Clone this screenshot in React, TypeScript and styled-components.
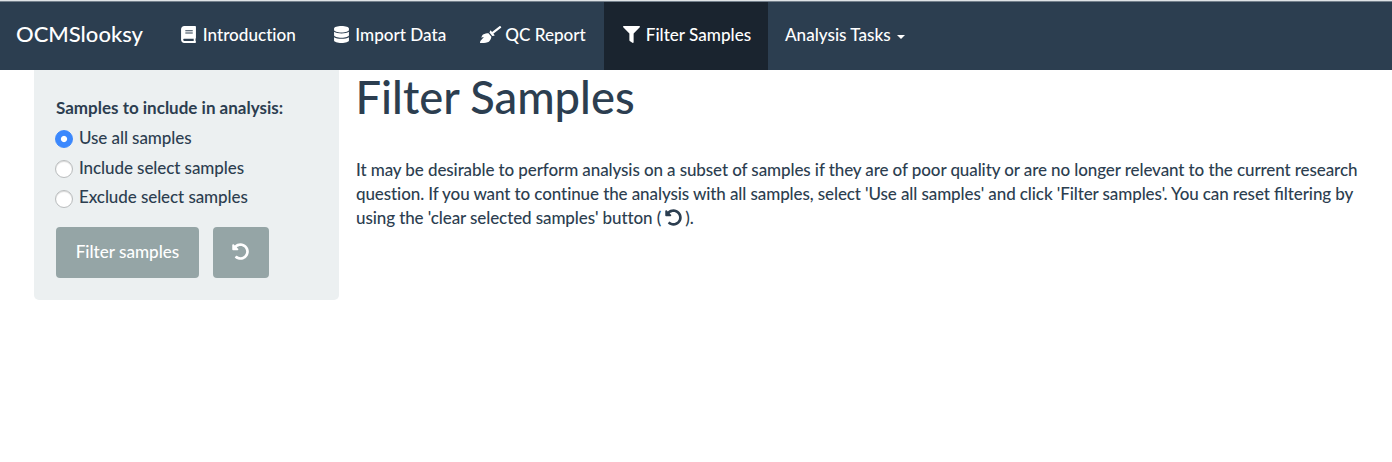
import React, { useState } from "react";
import styled, { createGlobalStyle } from "styled-components";
import { FaBook, FaBroom, FaDatabase, FaFilter, FaUndoAlt } from "react-icons/fa";

const GlobalStyle = createGlobalStyle`
  *, *::before, *::after { box-sizing: border-box; }
  body {
    margin: 0;
    background: #fff;
    color: #2c3e50;
    font-family: Lato, "Liberation Sans", sans-serif;
    font-size: 17px;
    line-height: 24px;
    font-variant-ligatures: none;
  }
`;

const Navbar = styled.nav`
  display: flex;
  height: 70px;
  padding-top: 1px;
  background: #2c3e50;
  border-top: 1px solid #dfe3e6;
  box-shadow: inset 0 1px 0 #74808c;
  color: #fff;
  font-size: 17.1px;
  font-weight: 500;
  white-space: nowrap;
`;

const Brand = styled.a`
  display: flex;
  align-items: center;
  width: 161px;
  padding: 0 0 4px 16px;
  font-size: 22px;
`;

const NavItem = styled.a<{ $active?: boolean; $width: number }>`
  display: flex;
  align-items: center;
  width: ${(p) => p.$width}px;
  padding: 0 0 3px 17px;
  background: ${(p) => (p.$active ? "#1a242f" : "transparent")};
`;

const NavIcon = styled.span`
  display: flex;
  justify-content: center;
  width: 21px;
  margin-right: 3.8px;
  font-size: 17px;

  svg {
    flex: none;
  }
`;

const Broom = styled(FaBroom)`
  width: 1.25em;
`;

const Caret = styled.span`
  margin: 5px 0 0 6px;
  border-top: 4px solid #fff;
  border-left: 4px solid transparent;
  border-right: 4px solid transparent;
`;

const Page = styled.div`
  display: flex;
  align-items: flex-start;
  padding-left: 34px;
`;

const Sidebar = styled.form`
  width: 305px;
  height: 230px;
  padding: 26px 22px 0;
  background: #ecf0f1;
  border-radius: 0 0 5px 5px;
`;

const GroupLabel = styled.div`
  margin-bottom: 6px;
  font-weight: 700;
  white-space: nowrap;
`;

const Option = styled.label`
  display: flex;
  align-items: flex-start;
  height: 29.6px;
  font-weight: 500;
  letter-spacing: -0.08px;
`;

const Radio = styled.input`
  appearance: none;
  flex: none;
  width: 18px;
  height: 18px;
  margin: 4.4px 6px 0 -1px;
  border: 1px solid #b9bcbd;
  border-radius: 50%;
  background: #fff;
  box-shadow: inset 0 1px 1px #d9d9d9;
  &:checked {
    border-color: #3b88fd;
    background: radial-gradient(circle, #fff 2.6px, #3b88fd 3.6px);
    box-shadow: none;
  }
`;

const Actions = styled.div`
  display: flex;
  gap: 14px;
  margin-top: 12px;
`;

const Button = styled.button<{ $width: number }>`
  display: flex;
  align-items: center;
  justify-content: center;
  width: ${(p) => p.$width}px;
  height: 51px;
  padding: 0 0 1px;
  border: 0;
  border-radius: 4px;
  background: #95a5a6;
  color: #fff;
  font: inherit;
  font-size: 17.1px;
  font-weight: 500;
  font-variant-ligatures: none;
`;

const Content = styled.main`
  margin-left: 17px;
  white-space: nowrap;
`;

const Title = styled.h1`
  margin: 2px 0 36px;
  font-size: 45.3px;
  font-weight: 500;
  line-height: 50px;
  text-indent: -0.5px;
`;

const Line = styled.div`
  height: 24px;
  font-weight: 500;
  letter-spacing: -0.096px;
`;

const Ligature = styled.span`
  letter-spacing: 0;
  font-variant-ligatures: common-ligatures;
`;

const InlineUndo = styled(FaUndoAlt)`
  margin: 0 3px 0 4px;
  vertical-align: -2px;
`;

const choices = ["Use all samples", "Include select samples", "Exclude select samples"];

export default function App() {
  const [choice, setChoice] = useState(choices[0]);
  return (
    <>
      <GlobalStyle />
      <Navbar>
        <Brand>OCMSlooksy</Brand>
        <NavItem $width={152.5}><NavIcon><FaBook /></NavIcon>Introduction</NavItem>
        <NavItem $width={150}><NavIcon><FaDatabase /></NavIcon>Import Data</NavItem>
        <NavItem $width={140.5}><NavIcon><Broom /></NavIcon>QC Report</NavItem>
        <NavItem $width={164} $active><NavIcon><FaFilter /></NavIcon>Filter Samples</NavItem>
        <NavItem $width={136}>Analysis Tasks<Caret /></NavItem>
      </Navbar>
      <Page>
        <Sidebar>
          <GroupLabel>Samples to include in analysis:</GroupLabel>
          {choices.map((c) => (
            <Option key={c}>
              <Radio type="radio" name="samples" checked={choice === c} onChange={() => setChoice(c)} />
              {c}
            </Option>
          ))}
          <Actions>
            <Button type="button" $width={143}>Filter samples</Button>
            <Button type="button" $width={56} aria-label="Clear selected samples"><FaUndoAlt /></Button>
          </Actions>
        </Sidebar>
        <Content>
          <Title>Filter Samples</Title>
          <Line>It may be desirable to perform analysis on a subset of samples if they are of poor quality or are no longer relevant to the current research</Line>
          <Line>question. If you want to continue the analysis with all samples, select 'Use all samples' and click 'Filter samples'. You can reset <Ligature>fi</Ligature>ltering by</Line>
          <Line>using the 'clear selected samples' button (<InlineUndo />).</Line>
        </Content>
      </Page>
    </>
  );
}
